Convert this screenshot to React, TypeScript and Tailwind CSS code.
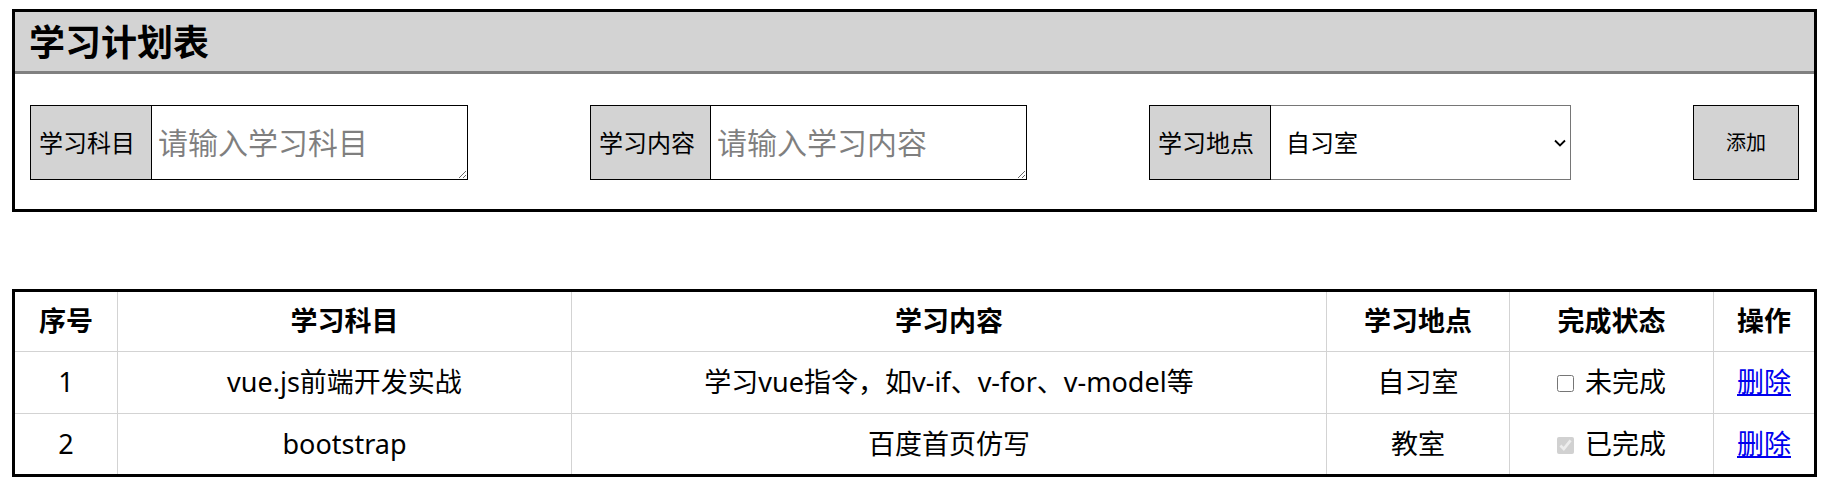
import { useState } from 'react'

type Plan = {
  id: number
  subject: string
  content: string
  place: string
  done: boolean
}

const initialPlans: Plan[] = [
  { id: 1, subject: 'vue.js前端开发实战', content: '学习vue指令，如v-if、v-for、v-model等', place: '自习室', done: false },
  { id: 2, subject: 'bootstrap', content: '百度首页仿写', place: '教室', done: true },
]

export default function App() {
  const [plans, setPlans] = useState<Plan[]>(initialPlans)
  const [place, setPlace] = useState('自习室')

  return (
    <div className="px-[12px] pt-[9px] pb-[8px] font-['Noto_Sans','Noto_Sans_CJK_SC',sans-serif] text-black">
      <div className="border-[3px] border-black">
        <div className="h-[62px] bg-[#d3d3d3] border-b-[3px] border-[#808080] pl-[14px] flex items-center">
          <h1 className="text-[36px] font-bold leading-none pt-[3px]">学习计划表</h1>
        </div>
        <div className="flex justify-between px-[15px] pt-[31px] pb-[29px]">
          <div className="flex h-[75px]">
            <span className="w-[122px] bg-[#d3d3d3] border border-black flex items-center pl-[8px] text-[24px]">学习科目</span>
            <textarea
              className="w-[316px] border border-l-0 border-black px-[6px] pt-[17px] text-[30px] leading-[40px]"
              placeholder="请输入学习科目"
            />
          </div>
          <div className="flex h-[75px]">
            <span className="w-[121px] bg-[#d3d3d3] border border-black flex items-center pl-[8px] text-[24px]">学习内容</span>
            <textarea
              className="w-[316px] border border-l-0 border-black px-[6px] pt-[17px] text-[30px] leading-[40px]"
              placeholder="请输入学习内容"
            />
          </div>
          <div className="flex h-[75px]">
            <span className="w-[122px] bg-[#d3d3d3] border border-black flex items-center pl-[8px] text-[24px]">学习地点</span>
            <div className="relative w-[300px]">
              <select
                className="appearance-none w-full h-full bg-white border border-l-0 border-[#767676] pl-[15px] text-[24px] outline-none"
                value={place}
                onChange={(e) => setPlace(e.target.value)}
              >
                <option>自习室</option>
                <option>教室</option>
                <option>图书馆</option>
              </select>
              <svg
                className="absolute right-[5px] top-[34px] pointer-events-none"
                width="12"
                height="8"
                viewBox="0 0 12 8"
                fill="none"
              >
                <path d="M1 1.5l5 5 5-5" stroke="#000" strokeWidth="1.8" />
              </svg>
            </div>
          </div>
          <button className="w-[106px] h-[75px] bg-[#d3d3d3] border border-black text-[20px]">添加</button>
        </div>
      </div>

      <table className="mt-[77px] w-full table-fixed border-collapse border-[3px] border-black text-[27px] text-center">
        <colgroup>
          <col className="w-[104px]" />
          <col className="w-[454px]" />
          <col className="w-[755px]" />
          <col className="w-[183px]" />
          <col className="w-[204px]" />
          <col />
        </colgroup>
        <thead>
          <tr className="h-[61px]">
            {['序号', '学习科目', '学习内容', '学习地点', '完成状态', '操作'].map((h) => (
              <th key={h} className="border border-[#d3d3d3] font-bold">
                {h}
              </th>
            ))}
          </tr>
        </thead>
        <tbody>
          {plans.map((p) => (
            <tr key={p.id} className="h-[62px]">
              <td className="border border-[#d3d3d3]">{p.id}</td>
              <td className="border border-[#d3d3d3]">{p.subject}</td>
              <td className="border border-[#d3d3d3]">{p.content}</td>
              <td className="border border-[#d3d3d3]">{p.place}</td>
              <td className="border border-[#d3d3d3]">
                <span className="inline-flex items-center gap-[11px]">
                  <input type="checkbox" className="w-[17px] h-[17px] mt-[3px]" checked={p.done} disabled={p.done} readOnly />
                  {p.done ? '已完成' : '未完成'}
                </span>
              </td>
              <td className="border border-[#d3d3d3]">
                <a
                  href="#"
                  className="text-[#0000ee] underline"
                  onClick={(e) => {
                    e.preventDefault()
                    setPlans(plans.filter((x) => x.id !== p.id))
                  }}
                >
                  删除
                </a>
              </td>
            </tr>
          ))}
        </tbody>
      </table>
    </div>
  )
}
